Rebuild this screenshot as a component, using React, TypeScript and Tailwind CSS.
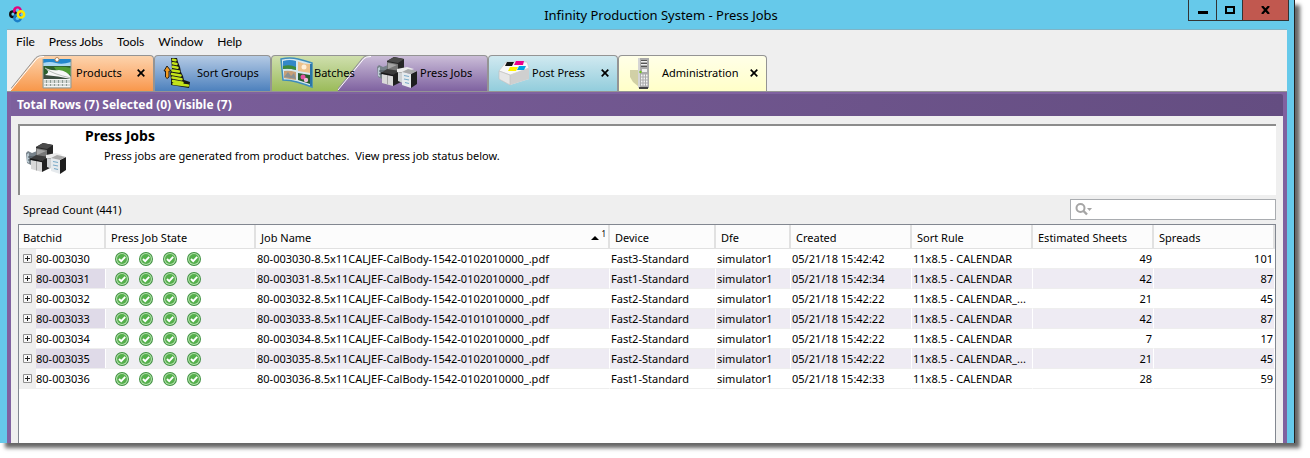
import React from "react";

type Job = {
  batch: string;
  name: string;
  device: string;
  dfe: string;
  created: string;
  rule: string;
  sheets: number;
  spreads: number;
};

const jobs: Job[] = [
  { batch: "80-003030", name: "80-003030-8.5x11CALJEF-CalBody-1542-0102010000_.pdf", device: "Fast3-Standard", dfe: "simulator1", created: "05/21/18 15:42:42", rule: "11x8.5 - CALENDAR", sheets: 49, spreads: 101 },
  { batch: "80-003031", name: "80-003031-8.5x11CALJEF-CalBody-1542-0102010000_.pdf", device: "Fast1-Standard", dfe: "simulator1", created: "05/21/18 15:42:34", rule: "11x8.5 - CALENDAR", sheets: 42, spreads: 87 },
  { batch: "80-003032", name: "80-003032-8.5x11CALJEF-CalBody-1542-0102010000_.pdf", device: "Fast2-Standard", dfe: "simulator1", created: "05/21/18 15:42:22", rule: "11x8.5 - CALENDAR_...", sheets: 21, spreads: 45 },
  { batch: "80-003033", name: "80-003033-8.5x11CALJEF-CalBody-1542-0101010000_.pdf", device: "Fast2-Standard", dfe: "simulator1", created: "05/21/18 15:42:22", rule: "11x8.5 - CALENDAR", sheets: 42, spreads: 87 },
  { batch: "80-003034", name: "80-003034-8.5x11CALJEF-CalBody-1542-0102010000_.pdf", device: "Fast2-Standard", dfe: "simulator1", created: "05/21/18 15:42:22", rule: "11x8.5 - CALENDAR", sheets: 7, spreads: 17 },
  { batch: "80-003035", name: "80-003035-8.5x11CALJEF-CalBody-1542-0102010000_.pdf", device: "Fast2-Standard", dfe: "simulator1", created: "05/21/18 15:42:22", rule: "11x8.5 - CALENDAR_...", sheets: 21, spreads: 45 },
  { batch: "80-003036", name: "80-003036-8.5x11CALJEF-CalBody-1542-0102010000_.pdf", device: "Fast1-Standard", dfe: "simulator1", created: "05/21/18 15:42:33", rule: "11x8.5 - CALENDAR", sheets: 28, spreads: 59 },
];

function Logo() {
  return (
    <svg width="17" height="17" viewBox="0 0 17 17" fill="none" strokeWidth="2.400" aria-hidden="true">
      <circle cx="8.500" cy="4.600" r="3.200" stroke="#e6007e" />
      <circle cx="4" cy="8.200" r="2.800" stroke="#111" />
      <circle cx="8.500" cy="12" r="3.200" stroke="#1b7fc9" />
      <circle cx="12" cy="8.400" r="3.200" stroke="#ffe600" />
      <path d="M6.500 2.200A3 3 0 0 0 5.800 6.400" stroke="#e6007e" />
    </svg>
  );
}

function CalendarIcon() {
  return (
    <svg width="30" height="32" viewBox="0 0 30 32" aria-hidden="true">
      <rect x="1" y="2" width="28" height="29" fill="#d3d8d4" />
      <rect x="1" y="2" width="28" height="6" fill="#2387cd" />
      <path d="M1 6Q8 4 14 6T29 5V11H1Z" fill="#a9d7f2" />
      <path d="M1 9H29V22H1Z" fill="#2c5f2d" />
      <path d="M12 10Q22 9 29 11V18L14 13Z" fill="#4f9b34" />
      <path d="M1 18Q9 16 22 20L28 22H1Z" fill="#3e4f42" />
      <path d="M3 10Q7 14 17 13Q25 14 29 20V22Q16 19 3 18Q9 15 3 10Z" fill="#f7f7f7" />
      <path d="M3 11Q10 17 29 21" stroke="#b9bdb9" fill="none" />
      <path d="M4.500 23V30M8.500 23V30M12.500 23V30M16.500 23V30M20.500 23V30M24.500 23V30" stroke="#8f9b95" />
      <path d="M2 22.500H28M2 26.500H28M2 29.500H28" stroke="#f4f4f4" />
      <path d="M1 2V31H29V2" stroke="#8f9a95" fill="none" />
      <circle cx="15" cy="2.500" r="2" fill="#fff" stroke="#b6895e" />
    </svg>
  );
}

function SortIcon() {
  return (
    <svg width="28" height="32" viewBox="0 0 28 32" aria-hidden="true">
      <path d="M4 9L1 14H2.500V20Q4 23 6 20V14H8Z" fill="#f39a1d" stroke="#1b1b1b" strokeLinejoin="round" />
      <path d="M8 1L14 1L15 5L17 10L18 15L20 19L21 23L27 25L26 31L8 28L8 22L7 16L9 12Z" fill="#161616" />
      <path d="M10 2.800L12.500 3.200M10 6.300L13.500 7M9.800 9.800L14.500 10.800M9.500 13.400L16 14.600M9 17L17.500 18.500M9.500 20.600L18.500 22.200M10 24L19.500 25.700M10.500 26.800L25 28.500" stroke="#c4e31a" strokeWidth="2.500" strokeLinecap="round" />
    </svg>
  );
}

function BatchIcon() {
  return (
    <svg width="33" height="31" viewBox="0 0 33 31" aria-hidden="true">
      <path d="M1 2Q10 0 18 2T32 6V30Q24 27 17 25T3 23Z" fill="#d5e8ef" stroke="#3e8dbb" strokeWidth="1.500" />
      <path d="M3 4Q10 2 16 4V13Q9 11 3 12Z" fill="#3388c8" />
      <path d="M3 9Q10 7 16 10V13Q9 11 3 12Z" fill="#3f8a38" />
      <path d="M18 4.500Q24 7 30 7V16Q24 15 18 14Z" fill="#edc28c" />
      <circle cx="24" cy="10" r="2.500" fill="#fff0d9" />
      <path d="M4 14Q9 13 16 15V23Q9 22 4 21Z" fill="#c8a078" />
      <path d="M4 20L8 15L11 19L14 16L16 22Z" fill="#8b9192" />
      <path d="M18 16Q24 17 30 18V27Q24 25 18 23Z" fill="#275e2e" />
      <circle cx="23" cy="20" r="2.500" fill="#e252a2" />
      <circle cx="26" cy="23" r="2.200" fill="#f4b9da" />
      <path d="M31 7V29" stroke="#2b75a8" strokeWidth="2" />
    </svg>
  );
}

function PressIcon() {
  return (
    <svg width="40" height="33" viewBox="0 0 40 33" aria-hidden="true">
      <path d="M0 11L2 9L6 11L11 9V20L5 23L1 21Z" fill="#77828a" />
      <path d="M1 12L3 11V21L1 20Z" fill="#b9c9d2" />
      <path d="M2 15H10M2 18H9" stroke="#465057" />
      <path d="M10 5L17 1L27 3V16L21 19L10 15Z" fill="#262626" />
      <path d="M17 1L27 3L21 7L10 5Z" fill="#4b4b4b" />
      <path d="M10 6L21 8V17L10 14Z" fill="#777" />
      <path d="M11 7L20 9L11 13Z" fill="#a5a5a5" />
      <path d="M4 17L10 13L23 15L16 19Z" fill="#3c3c3c" />
      <path d="M15 19L24 15V26L16 30Z" fill="#202020" />
      <path d="M5 18L16 20V30L5 27Z" fill="#d9d9d9" />
      <path d="M10.500 19V28.500" stroke="#a5a5a5" />
      <path d="M4 17L16 19.500" stroke="#161616" strokeWidth="1.500" />
      <path d="M20 13L30 11L37 13L27 17L20 16Z" fill="#ececec" />
      <path d="M21 16L26 17V27L21 25Z" fill="#cfd2d4" />
      <path d="M25 16L34 18V32L25 29Z" fill="#e6eaed" />
      <path d="M34 18L40 15V28L34 32Z" fill="#1e1e1e" />
      <path d="M25 16L31 13L40 15L34 18Z" fill="#a9a9a9" />
      <path d="M27 19.500L32 20.500M27 23L32 24M28 26.500L32 27.500" stroke="#7aabc9" strokeWidth="1.200" />
    </svg>
  );
}

function PostPressIcon() {
  return (
    <svg width="32" height="26" viewBox="0 0 32 26" aria-hidden="true">
      <path d="M1 11L8 2L29 2L31 8V19L12 25L1 19Z" fill="#e9e9e9" />
      <path d="M1 11L8 2L29 2L31 8L12 15Z" fill="#f8f8f8" stroke="#c5c5c5" strokeWidth=".6" />
      <path d="M12 15L31 8V19L12 25Z" fill="#cfcfcf" />
      <path d="M1 11L12 15V25L1 19Z" fill="#e6e6e6" stroke="#bcbcbc" strokeWidth=".6" />
      <path d="M9 2H16L14 6L7 6Z" fill="#151515" />
      <path d="M18 1H26L25 5H16Z" fill="#ec008c" />
      <path d="M12 7H20L18 11H10Z" fill="#fff200" />
      <path d="M21 6H28L26 10H19Z" fill="#00a3e4" />
    </svg>
  );
}

function ServerIcon() {
  return (
    <svg width="20" height="32" viewBox="0 0 20 32" aria-hidden="true">
      <path d="M0 13H9V30L3 25L0 20Z" fill="#b9b78c" opacity=".65" />
      <path d="M8 1H19V31H8Z" fill="#aaa" />
      <path d="M8 1H10V31H8Z" fill="#d5d5d5" />
      <path d="M11 3.500H17M11 6.500H17M11 9.500H17" stroke="#555" />
      <path d="M11 4.500H17M11 7.500H17" stroke="#eee" />
      <path d="M12 12H17V15H12Z" fill="#eee" />
      <circle cx="10.500" cy="15" r="1.200" fill="#70c41b" />
      <path d="M11 18.500H18M11 21.500H18M11 24.500H18M11 27.500H18" stroke="#f3f3f3" strokeWidth="2" strokeDasharray="1.500 1" />
      <path d="M9 30H18V32H9Z" fill="#444" />
    </svg>
  );
}

function CloseMark() {
  return (
    <svg width="8" height="8" viewBox="0 0 8 8" aria-hidden="true">
      <path d="M.7.7L7.300 7.300M7.300.7L.7 7.300" stroke="#000" strokeWidth="1.700" />
    </svg>
  );
}

function CheckIcon() {
  return (
    <svg width="14" height="14" viewBox="0 0 14 14" role="img" aria-label="Complete">
      <circle cx="7" cy="7" r="7" fill="#3f9140" />
      <circle cx="7" cy="7" r="6" fill="#b4dfac" />
      <circle cx="7" cy="7" r="4.900" fill="#55b04c" />
      <path d="M4 7L6.200 9.200L10.200 4.800" fill="none" stroke="#fff" strokeWidth="1.900" />
    </svg>
  );
}

function Slant({ id, from, to }: { id: string; from: string; to: string }) {
  return (
    <svg width="33" height="36" viewBox="0 0 33 36" className="shrink-0" aria-hidden="true">
      <defs>
        <linearGradient id={id} x1="0" y1="0" x2="0" y2="1">
          <stop offset="0" stopColor={from} />
          <stop offset="1" stopColor={to} />
        </linearGradient>
      </defs>
      <path d="M0 36V34L25 3Q28 .5 33 .5V36Z" fill={`url(#${id})`} />
      <path d="M0 33.500L25 2.500Q27 .5 33 .5" fill="none" stroke="#949494" />
      <path d="M0 35L26 3.500Q28 1.500 33 1.500" fill="none" stroke="#fff" />
    </svg>
  );
}

type TabProps = {
  label: string;
  icon: React.ReactNode;
  body: string;
  slant?: React.ReactNode;
  wrap?: string;
  closable?: boolean;
};

function Tab({ label, icon, body, slant, wrap = "", closable }: TabProps) {
  return (
    <div className={`flex h-9 ${wrap}`}>
      {slant}
      <div className={`flex items-center border-t border-[#949494] pb-[2px] ${slant ? "" : "rounded-tl-[4px] border-l"} rounded-tr-[4px] border-r bg-linear-to-b ${body}`}>
        <button type="button" className="relative z-10 flex items-center whitespace-nowrap">
          {icon}
          {label}
        </button>
        {closable && (
          <button type="button" aria-label={`Close ${label}`} className="mr-2 ml-auto">
            <CloseMark />
          </button>
        )}
      </div>
    </div>
  );
}

const columns = ["Batchid", "Press Job State", "Job Name", "Device", "Dfe", "Created", "Sort Rule", "Estimated Sheets", "Spreads"];

export default function App() {
  return (
    <div className="flex h-screen bg-white pr-[15px] pb-[15px] font-['Noto_Sans',sans-serif] text-[11px] leading-4 text-black">
      <div className="flex min-w-0 flex-1 flex-col border-r border-[#222] bg-[#66c9ea] px-[7px] pb-0 shadow-[5px_5px_4px_0px_rgba(0,0,0,0.6)]">
        <header className="grid h-[30px] shrink-0 grid-cols-[1fr_auto_1fr] border-b border-[#7fb4c6]">
          <div className="pt-[6px] pl-[2px]">
            <Logo />
          </div>
          <h1 className="pt-[5px] pl-7 text-[13px] leading-5">Infinity Production System - Press Jobs</h1>
          <div className="-mr-[2px] flex h-[21px] justify-self-end border border-t-0 border-[#333]">
            <button type="button" aria-label="Minimize" className="grid w-[28px] place-items-center border-r border-[#333]">
              <svg width="10" height="10" aria-hidden="true"><path d="M0 6H10V9H0Z" /></svg>
            </button>
            <button type="button" aria-label="Maximize" className="grid w-[26px] place-items-center border-r border-[#333]">
              <svg width="10" height="8" aria-hidden="true"><path d="M1 1H9V7H1Z" fill="none" stroke="#000" strokeWidth="2" /></svg>
            </button>
            <button type="button" aria-label="Close" className="grid w-[45px] place-items-center bg-[#c1584f]">
              <svg width="9" height="8" viewBox="0 0 9 8" aria-hidden="true"><path d="M1 0L8 8M8 0L1 8" stroke="#000" strokeWidth="2.200" /></svg>
            </button>
          </div>
        </header>

        <div className="flex min-h-0 flex-1 flex-col bg-[#efefef]">
          <nav className="flex h-[25px] shrink-0 items-center gap-[14px] pb-px pl-[9px] font-['Lato',sans-serif] text-[12px]">
            <button type="button">File</button>
            <button type="button">Press Jobs</button>
            <button type="button">Tools</button>
            <button type="button">Window</button>
            <button type="button">Help</button>
          </nav>

          <nav className="flex h-9 shrink-0 pl-1" aria-label="Sections">
            <Tab label="Products" closable icon={<span className="mr-1 -ml-[2px]"><CalendarIcon /></span>} body="from-[#fcd3ac] to-[#f8974a] w-[110px]" slant={<Slant id="slant-products" from="#fcd3ac" to="#f8974a" />} />
            <Tab label="Sort Groups" icon={<span className="mr-[6px] ml-2"><SortIcon /></span>} body="from-[#b4cae4] to-[#4d81bd] w-[117px]" />
            <Tab label="Batches" icon={<span className="mr-px ml-2"><BatchIcon /></span>} body="from-[#cfdfad] to-[#9bbb59] w-[100px]" />
            <Tab label="Press Jobs" wrap="-ml-[33px]" icon={<span className="mr-[3px] ml-[6px]"><PressIcon /></span>} body="from-[#cbbdd8] to-[#7f62a0] w-[117px]" slant={<Slant id="slant-press" from="#cbbdd8" to="#7f62a0" />} />
            <Tab label="Post Press" closable icon={<span className="mr-[2px] ml-[9px]"><PostPressIcon /></span>} body="from-[#d0e9f0] to-[#92cddc] w-[130px]" />
            <Tab label="Administration" closable icon={<span className="mr-[12px] ml-[11px]"><ServerIcon /></span>} body="from-[#ffffe8] to-[#ffffc8] w-[149px]" />
          </nav>

          <main className="flex min-h-0 flex-1 flex-col border-x-4 border-[#8062a0]">
            <div className="-mx-1 h-[25px] shrink-0 border-t border-[#949494] bg-[#8062a0] px-1 pt-[2px]">
              <div className="h-full rounded-t-[2px] bg-linear-to-r from-[#7d609d] to-[#644d81] pl-[6px] text-[12px] leading-[22px] font-bold text-white">
                Total Rows (7) Selected (0) Visible (7)
              </div>
            </div>

            <div className="flex min-h-0 flex-1 flex-col px-[7px] pt-2">
              <section className="flex h-[71px] shrink-0 border-t-2 border-l-2 border-[#8c8c8c] bg-white pl-[6px]">
                <div className="pt-4">
                  <PressIcon />
                </div>
                <div className="pl-[19px]">
                  <h2 className="pt-[2px] text-[14px] leading-4 font-bold">Press Jobs</h2>
                  <p className="pt-1 pl-[19px]">Press jobs are generated from product batches.&nbsp; View press job status below.</p>
                </div>
              </section>

              <div className="flex h-[29px] shrink-0 items-center justify-between pl-[5px]">
                <span>Spread Count (441)</span>
                <label className="flex h-[21px] w-[206px] items-center border border-[#a9acb0] bg-white pl-1">
                  <svg width="18" height="13" viewBox="0 0 18 13" aria-hidden="true">
                    <circle cx="5.500" cy="5" r="4" fill="none" stroke="#a5a5a5" strokeWidth="2" />
                    <path d="M8.500 8L12 11.500" stroke="#a5a5a5" strokeWidth="2.400" />
                    <path d="M12 5H17L14.500 8Z" fill="#a5a5a5" />
                  </svg>
                  <input type="text" aria-label="Search" className="h-full min-w-0 flex-1 outline-none" />
                </label>
              </div>

              <div className="min-h-0 flex-1 overflow-hidden border border-b-0 border-[#828790] bg-white">
                <table className="w-full table-fixed border-separate border-spacing-0">
                  <colgroup>
                    <col className="w-[87px]" />
                    <col className="w-[150px]" />
                    <col />
                    <col className="w-[106px]" />
                    <col className="w-[75px]" />
                    <col className="w-[121px]" />
                    <col className="w-[121px]" />
                    <col className="w-[121px]" />
                    <col className="w-[121px]" />
                  </colgroup>
                  <thead>
                    <tr>
                      {columns.map((c) => (
                        <th key={c} scope="col" className="h-6 border-r-2 border-b border-[#e1e1e1] bg-[#fcfcfc] p-0 pt-[2px] pl-[5px] text-left font-normal whitespace-nowrap first:pl-1">
                          <span className="flex items-center justify-between">
                            {c}
                            {c === "Job Name" && (
                              <span className="flex items-center gap-[2px] pr-[2px]">
                                <svg width="8" height="4" aria-hidden="true"><path d="M0 4L4 0L8 4Z" /></svg>
                                <sup className="text-[8px] leading-none">1</sup>
                              </span>
                            )}
                          </span>
                        </th>
                      ))}
                    </tr>
                  </thead>
                  <tbody className="[&_td]:h-5 [&_td]:overflow-hidden [&_td]:border-b [&_td]:border-b-[#eeeeee] [&_td]:p-0 [&_td]:whitespace-nowrap">
                    {jobs.map((j, i) => {
                      const cell = i % 2 ? "bg-[#eeebf3] border-r border-r-white" : "bg-white border-r border-r-white";
                      return (
                        <tr key={j.batch}>
                          <td>
                            <div className="flex h-[19px]">
                              <div className="grid w-[17px] place-items-center bg-[#efefef]">
                                <button type="button" aria-label={`Expand ${j.batch}`}>
                                  <svg width="9" height="9" className="block" aria-hidden="true">
                                    <path d="M.5.5H8.500V8.500H.5Z" fill="#f8f8f8" stroke="#919191" />
                                    <path d="M2 4.500H7M4.500 2V7" stroke="#222" />
                                  </svg>
                                </button>
                              </div>
                              <div className={i % 2 ? "mr-px flex-1 bg-[#dfdae8] leading-[19px]" : "flex-1 leading-[19px]"}>{j.batch}</div>
                            </div>
                          </td>
                          <td className={i % 2 ? "border-r border-r-white bg-[#efeef2]" : "bg-white"}>
                            <div className="flex gap-[10px] pl-[9px]">
                              <CheckIcon />
                              <CheckIcon />
                              <CheckIcon />
                              <CheckIcon />
                            </div>
                          </td>
                          <td className={cell}><div className="pl-px">{j.name}</div></td>
                          <td className={cell}><div className="pl-px">{j.device}</div></td>
                          <td className={cell}><div className="pl-px">{j.dfe}</div></td>
                          <td className={cell}><div className="pl-px">{j.created}</div></td>
                          <td className={cell}><div className="pl-px">{j.rule}</div></td>
                          <td className={cell}><div className="pr-px text-right">{j.sheets}</div></td>
                          <td className={cell}><div className="pr-px text-right">{j.spreads}</div></td>
                        </tr>
                      );
                    })}
                  </tbody>
                </table>
              </div>
            </div>
          </main>
        </div>
      </div>
    </div>
  );
}
